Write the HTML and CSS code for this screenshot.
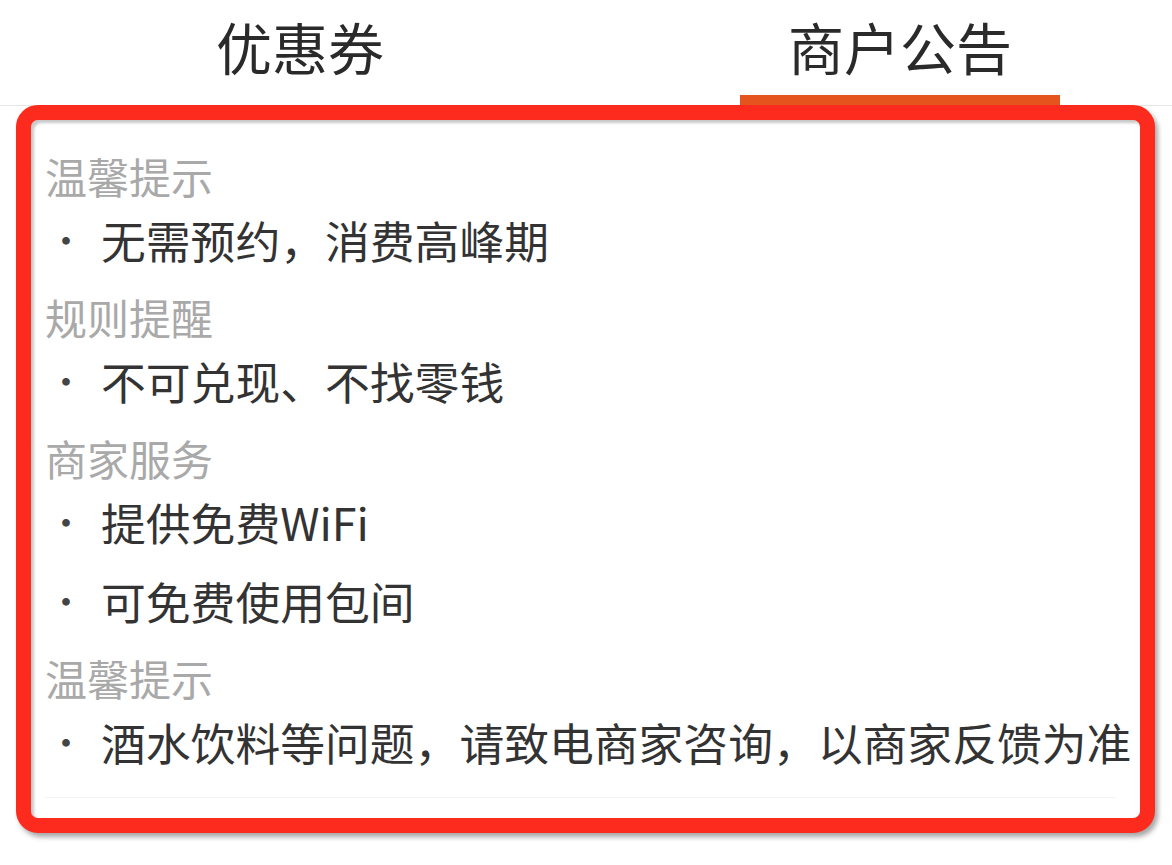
FILE: index.html
```html
<!DOCTYPE html>
<html lang="zh-CN">
<head>
<meta charset="utf-8">
<title>商户公告</title>
<link rel="stylesheet" href="styles.css">
</head>
<body>
<div class="page">
  <nav class="tabs">
    <div class="tab">
      <span class="tab-label">优惠券</span>
      <span class="tab-bar"></span>
    </div>
    <div class="tab tab-active">
      <span class="tab-label">商户公告</span>
      <span class="tab-bar"></span>
    </div>
  </nav>
  <section class="notice">
    <div class="notice-list">
      <div class="group">
        <div class="group-title">温馨提示</div>
        <div class="item"><span class="dot">·</span><span class="item-text">无需预约，消费高峰期</span></div>
      </div>
      <div class="group">
        <div class="group-title">规则提醒</div>
        <div class="item"><span class="dot">·</span><span class="item-text">不可兑现、不找零钱</span></div>
      </div>
      <div class="group">
        <div class="group-title">商家服务</div>
        <div class="item"><span class="dot">·</span><span class="item-text">提供免费WiFi</span></div>
        <div class="item"><span class="dot">·</span><span class="item-text">可免费使用包间</span></div>
      </div>
      <div class="group">
        <div class="group-title">温馨提示</div>
        <div class="item"><span class="dot">·</span><span class="item-text">酒水饮料等问题，请致电商家咨询，以商家反馈为准</span></div>
      </div>
    </div>
  </section>
</div>
</body>
</html>
```

FILE: styles.css
```css
html, body {
  margin: 0;
  padding: 0;
  background: #ffffff;
}

body {
  font-family: "Noto Sans CJK SC", "Noto Sans", sans-serif;
  overflow: hidden;
}

.page {
  width: 1172px;
  height: 865px;
  overflow: hidden;
  background: #ffffff;
}

.tabs {
  display: grid;
  grid-template-columns: 600px 600px;
  border-bottom: 1px solid #e6e6e6;
  width: 1172px;
  overflow: hidden;
}

.tab {
  display: flex;
  flex-direction: column;
  align-items: center;
  height: 105px;
}

.tab-label {
  display: block;
  height: 95px;
  line-height: 91px;
  padding-bottom: 4px;
  box-sizing: border-box;
  font-size: 56px;
  color: #2a2a2a;
}

.tab-bar {
  display: block;
  width: 320px;
  height: 10px;
  background: transparent;
}

.tab-active .tab-bar {
  background: #e5541d;
}

.notice {
  margin: -1px 0 0 16px;
  width: 1139px;
  box-sizing: border-box;
  border: 15px solid #fd2b1e;
  border-radius: 22px;
  background: #ffffff;
  box-shadow: 3px 4px 5px rgba(0, 0, 0, 0.35), inset 3px 3px 3px rgba(0, 0, 0, 0.22);
  padding: 32px 0 20px 14px;
}

.notice-list {
  padding-bottom: 16px;
  border-bottom: 1px solid #f3f3f3;
  margin-right: 24px;
}

.group {
  margin-bottom: 14px;
}

.group:last-child {
  margin-bottom: 0;
}

.group-title {
  font-size: 42px;
  line-height: 48px;
  height: 48px;
  color: #a9a9a9;
}

.item {
  display: flex;
  align-items: center;
  height: 79px;
  font-size: 44.8px;
  line-height: 79px;
  color: #333333;
}

.dot {
  display: inline-block;
  flex: 0 0 42px;
  width: 42px;
  margin-right: 14px;
  text-align: center;
  font-size: 36px;
  color: #444444;
}

.item-text {
  flex: 0 0 auto;
  white-space: nowrap;
}
```
